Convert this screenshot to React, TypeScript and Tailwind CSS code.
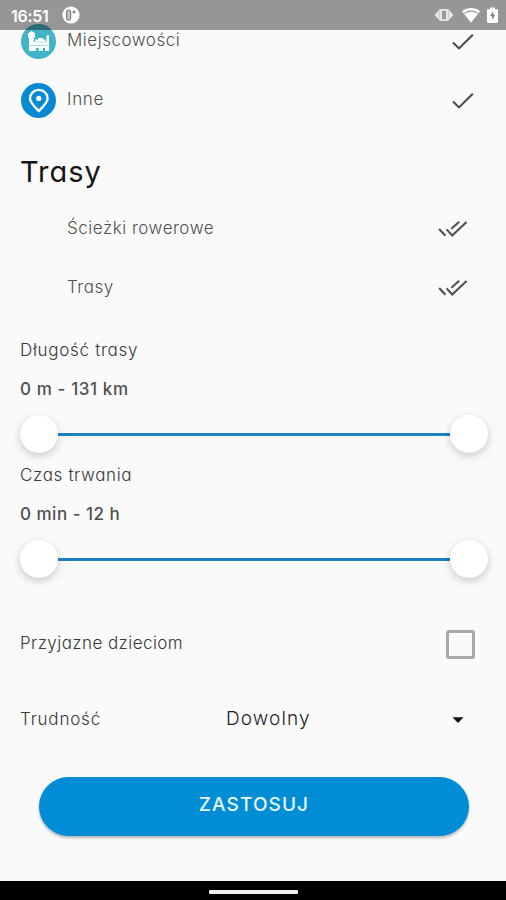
import React from "react";

function Check() {
  return (
    <svg className="mr-[32px] h-[18px] w-[22px]" viewBox="0 0 22 18" fill="none" stroke="#484848" strokeWidth="2.1">
      <path d="M1 9.6 7 15.4 20.8 1.7" />
    </svg>
  );
}

function DoubleCheck() {
  return (
    <svg className="mr-[38px] h-[18px] w-[30px]" viewBox="0 0 30 18" fill="none" stroke="#505050" strokeWidth="2.1">
      <path d="M1.2 8 7.4 14.8M8.6 8.4 14.2 14.5 28.6 1M13.4 7.8 21.2 .8" />
    </svg>
  );
}

function TownIcon() {
  return (
    <svg className="h-[35px] w-[35px]" viewBox="0 0 35 35">
      <circle cx="17.5" cy="17.5" r="17.5" fill="#41b5c7" />
      <path
        fill="#fff"
        d="M8 27V13.5H7V9.5L10.5 6.8 14 9.5v4h-1.2V18H14v-2.5h3V14h5v1.5h2.5V18h1v-5.8l1-1.2h.8l.8 1.2V27h-4v-3H22v3h-4.4v-3H15v3z"
      />
      <path stroke="#41b5c7" strokeWidth="0.5" d="M9 21.6h18M15.5 18.2h8" />
    </svg>
  );
}

function PinIcon() {
  return (
    <svg className="h-[35px] w-[35px]" viewBox="0 0 35 35">
      <circle cx="17.5" cy="17.5" r="17.5" fill="#0789d4" />
      <path
        d="M17.8 28.2C14.2 24 9 20 9 15.6a8.8 8.8 0 0 1 17.6 0c0 4.4-5.2 8.4-8.8 12.6z"
        fill="none"
        stroke="#fff"
        strokeWidth="2.3"
        strokeLinejoin="round"
      />
      <circle cx="17.8" cy="15.4" r="2.6" fill="#fff" />
    </svg>
  );
}

function CategoryRow({ icon, label, mark, spacing }: { icon?: React.ReactNode; label: string; mark: React.ReactNode; spacing: string }) {
  return (
    <div className="flex h-[59px] items-center pl-[21px]">
      <div className="w-[46px]">{icon}</div>
      <span className={`flex-1 pb-[1px] text-[17px] font-light text-[#505050] ${spacing}`}>{label}</span>
      {mark}
    </div>
  );
}

function Thumb() {
  return <div className="h-[38px] w-[38px] shrink-0 rounded-full bg-white shadow-[0_3px_8px_rgba(0,0,0,0.2)]" />;
}

function RangeSection({ title, value, titleSpacing, valueSpacing }: { title: string; value: string; titleSpacing: string; valueSpacing: string }) {
  return (
    <section className="h-[125px]">
      <div className={`flex h-[39px] items-center pt-[3px] pl-[20px] text-[17px] font-light text-[#383838] ${titleSpacing}`}>{title}</div>
      <div className={`flex h-[39px] items-center pt-[3px] pl-[20px] text-[17px] font-medium text-[#505050] ${valueSpacing}`}>{value}</div>
      <div className="flex h-[47px] items-center pt-[5px] pr-[18px] pl-[20px]">
        <Thumb />
        <div className="h-[3px] flex-1 bg-[#1b80c4]" />
        <Thumb />
      </div>
    </section>
  );
}

function StatusBar() {
  return (
    <div className="absolute inset-x-0 top-0 flex h-[30px] items-center bg-black/40 pl-[11px] text-white">
      <span className="w-[51px] pt-px text-[16px] font-semibold tracking-[-0.3px]">16:51</span>
      <svg className="h-[18px] w-[18px]" viewBox="0 0 18 18">
        <circle cx="9" cy="9" r="8.6" fill="#fff" />
        <rect x="4.6" y="4.2" width="4" height="10" rx="1.8" fill="#c4c4c4" stroke="#858585" strokeWidth="1.2" />
        <circle cx="12" cy="6" r="1.5" fill="#858585" />
      </svg>
      <div className="flex-1" />
      <svg className="h-[18px] w-[64px]" viewBox="0 0 64 18">
        <path fill="#e6e6e6" d="M.6 9l4-4.4L6 3h8l1.4 1.6 4 4.4-4 4.4L14 15H6l-1.4-1.6z" />
        <path fill="none" stroke="#c4c4c4" strokeWidth="0.8" d="M5.5 5v8M14.5 5v8" />
        <rect x="8" y="4.8" width="4" height="8.4" fill="#999" />
        <path fill="#fff" d="M28 5.2c5-4.3 13-4.3 18 0L37 16.8z" />
        <path fill="none" stroke="#999" strokeWidth="1.2" d="M30.3 7.4c4-3.1 9.4-3.1 13.4 0" />
        <path fill="#fff" d="M53 3.2h3V1.6h5v1.6h3v12.2q0 1.6-1.5 1.6h-8q-1.5 0-1.5-1.6z" />
        <path fill="#777" d="M59.2 5l-3 5h2v4l3-5.2h-2z" />
      </svg>
      <div className="w-[8px]" />
    </div>
  );
}

export default function App() {
  return (
    <div className="relative flex h-[900px] w-[506px] flex-col overflow-hidden bg-[#fafafa] font-['Inter','Open_Sans',sans-serif] [font-feature-settings:'cv11']">
      <main className="flex flex-1 flex-col pt-[12px]">
        <CategoryRow icon={<TownIcon />} label="Miejscowości" mark={<Check />} spacing="tracking-[0.52px]" />
        <CategoryRow icon={<PinIcon />} label="Inne" mark={<Check />} spacing="tracking-[0.7px]" />
        <h1 className="flex h-[70px] items-center pt-[14px] pl-[20px] text-[29px] font-normal tracking-[1px] text-[#151515]">Trasy</h1>
        <CategoryRow label="Ścieżki rowerowe" mark={<DoubleCheck />} spacing="tracking-[0.52px]" />
        <CategoryRow label="Trasy" mark={<DoubleCheck />} spacing="tracking-[0.5px]" />
        <div className="h-[12px]" />
        <RangeSection title="Długość trasy" value="0 m - 131 km" titleSpacing="tracking-[0.7px]" valueSpacing="tracking-[0.6px]" />
        <RangeSection title="Czas trwania" value="0 min - 12 h" titleSpacing="tracking-[0.65px]" valueSpacing="tracking-[0.5px]" />
        <label className="mt-[26px] flex h-[76px] items-center justify-between pr-[31px] pl-[20px] text-[17px] font-light text-[#383838]">
          <span className="pb-[1px] tracking-[0.44px]">Przyjazne dzieciom</span>
          <span className="h-[29px] w-[29px] rounded-[3px] border-[3px] border-[#a9a9a9]" />
        </label>
        <div className="flex h-[76px] items-center pl-[20px] font-light text-[#383838]">
          <span className="w-[206px] text-[17px] tracking-[0.8px]">Trudność</span>
          <span className="flex-1 pb-[1px] text-[19px] tracking-[1.1px] text-[#222]">Dowolny</span>
          <svg className="mr-[42px] h-[6px] w-[12px]" viewBox="0 0 12 6">
            <path d="M.4.3h11.2L6 5.9z" fill="#151515" />
          </svg>
        </div>
        <button className="mr-[37px] ml-[39px] mt-[19px] flex h-[59px] items-center justify-center rounded-full bg-[#018dd5] pb-[2px] text-[19px] font-medium tracking-[1.1px] text-[#eaf7ff] shadow-[0_2px_3px_rgba(0,0,0,0.28)]">
          ZASTOSUJ
        </button>
      </main>
      <footer className="flex h-[19px] items-center justify-center bg-black pt-[2px]">
        <div className="h-[4px] w-[89px] rounded-[1px] bg-[#eee]" />
      </footer>
      <StatusBar />
    </div>
  );
}
